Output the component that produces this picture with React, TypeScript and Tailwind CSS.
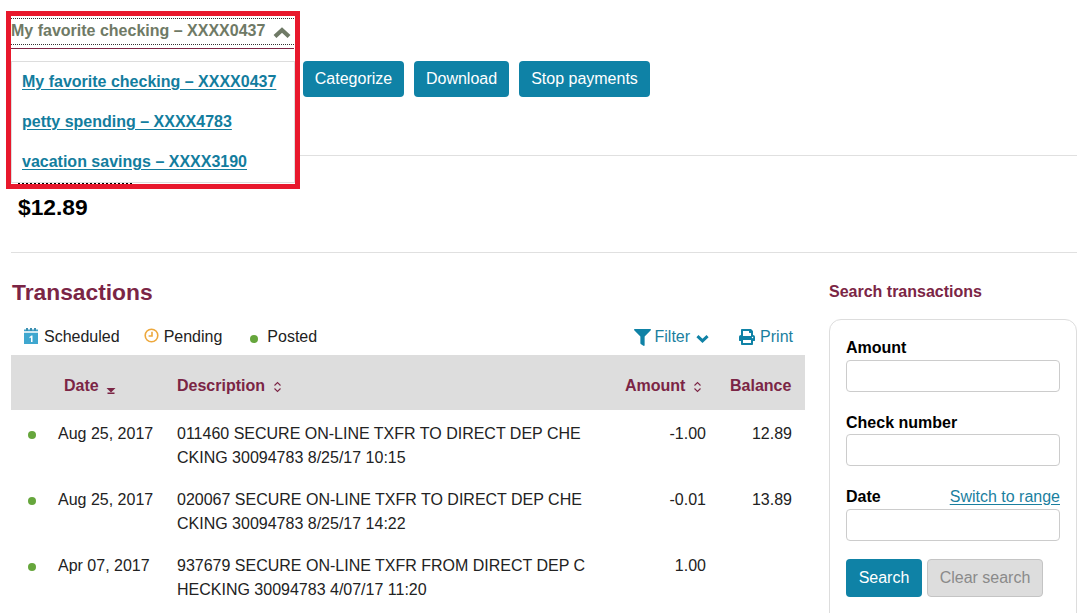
import { FaFilter, FaPrint } from 'react-icons/fa';

const transactions = [
  { date: 'Aug 25, 2017', desc: '011460 SECURE ON-LINE TXFR TO DIRECT DEP CHECKING 30094783 8/25/17 10:15', amount: '-1.00', balance: '12.89' },
  { date: 'Aug 25, 2017', desc: '020067 SECURE ON-LINE TXFR TO DIRECT DEP CHECKING 30094783 8/25/17 14:22', amount: '-0.01', balance: '13.89' },
  { date: 'Apr 07, 2017', desc: '937679 SECURE ON-LINE TXFR FROM DIRECT DEP CHECKING 30094783 4/07/17 11:20', amount: '1.00', balance: '' },
];

const accounts = ['My favorite checking – XXXX0437', 'petty spending – XXXX4783', 'vacation savings – XXXX3190'];

function SortIcon() {
  return (
    <svg width="9" height="12" viewBox="0 0 9 12" fill="none" stroke="#7b2545" strokeWidth="1.1" className="ml-[8px] mt-[7px]">
      <path d="M1.5 4.5 4.5 1.5 7.5 4.5" />
      <path d="M1.5 7.5 4.5 10.5 7.5 7.5" />
    </svg>
  );
}

function SortedIcon() {
  return (
    <svg width="10" height="6" viewBox="0 0 10 6" fill="#7b2545" className="ml-[7px] mt-[14px]">
      <path d="M0.5 0h9L5 4.5z" />
      <rect x="1.5" y="4.5" width="7" height="1.5" />
    </svg>
  );
}

function CalendarIcon() {
  return (
    <svg width="14" height="16" viewBox="0 0 14 16" className="mr-[6px] mt-[3px]">
      <rect x="0" y="1.5" width="14" height="14.5" fill="#3fa7cf" />
      <rect x="0" y="3" width="14" height="2" fill="#cfe8f2" />
      <rect x="2" y="0" width="2" height="3" fill="#3d8fb0" />
      <rect x="6" y="0" width="2" height="3" fill="#3d8fb0" />
      <rect x="10" y="0" width="2" height="3" fill="#3d8fb0" />
      <path d="M5.5 9 7.5 7.5H8.5V14H7V9.5L5.5 10.2z" fill="#ffffff" />
    </svg>
  );
}

function ClockIcon() {
  return (
    <svg width="15" height="15" viewBox="0 0 15 15" fill="none" stroke="#eda83c" strokeWidth="1.6" className="mr-[5px] mt-[3px]">
      <circle cx="7.5" cy="7.5" r="6.3" />
      <path d="M8 3.8V8H4.6" />
    </svg>
  );
}

function Chevron({ up, className, color }: { up?: boolean; className: string; color: string }) {
  return (
    <svg viewBox="0 0 18 11" fill="none" stroke={color} strokeWidth="4.2" className={className}>
      <path d={up ? 'M2 9.5 9 3 16 9.5' : 'M2 1.5 9 8 16 1.5'} />
    </svg>
  );
}

function Field({ label, link }: { label: string; link?: string }) {
  return (
    <div className="flex flex-col">
      <div className="flex h-[24px] items-center justify-between leading-[24px]">
        <span className="font-bold text-black">{label}</span>
        {link && <a className="text-[#1b7f9f] underline underline-offset-2">{link}</a>}
      </div>
      <input className="mt-[-0.5px] h-[32px] w-full rounded-[4px] border border-[#cccccc] bg-white" />
    </div>
  );
}

export default function App() {
  return (
    <div className="relative h-[613px] w-[1080px] overflow-hidden bg-white font-['Liberation_Sans',Arial,sans-serif] text-[16px] text-[#222222]">
      <div className="absolute left-[6px] top-[11px] z-10 h-[178px] w-[294px] border-[5px] border-[#e8182c]">
        <div className="mt-[2px] flex h-[27px] w-[283px] items-center justify-between border-y border-dotted border-[#333333] bg-white pb-[2px] pr-[3px] font-bold text-[#6f7a66]">
          <span>My favorite checking – XXXX0437</span>
          <Chevron up color="#6f7a66" className="mt-[3px] h-[11px] w-[18px]" />
        </div>
        <div className="mt-[3px] h-px w-[283px] bg-[#7b2545]" />
        <div className="mt-[12px] flex h-[122px] w-[284px] flex-col gap-[16px] border border-[#dddddd] bg-white pl-[10px] pt-[8px] font-bold text-[#137d9e]">
          {accounts.map((account) => (
            <a key={account} className="block h-[24px] leading-[24px] underline underline-offset-2">
              {account}
            </a>
          ))}
        </div>
      </div>

      <div className="ml-[303px] flex gap-[10px] pt-[61px]">
        <button className="h-[36px] w-[101px] rounded-[4px] bg-[#0f82a6] text-white">Categorize</button>
        <button className="h-[36px] w-[95px] rounded-[4px] bg-[#0f82a6] text-white">Download</button>
        <button className="h-[36px] w-[131px] rounded-[4px] bg-[#0f82a6] text-white">Stop payments</button>
      </div>

      <div className="ml-[11px] mr-[3px] mt-[58px] h-px bg-[#e0e0e0]" />

      <div className="pl-[18px]">
        <div className="mt-[6px] h-[24px] leading-[24px]">
          <span className="border-b-2 border-dotted border-black">Current balance</span>
        </div>
        <div className="mt-[4px] text-[22.8px] font-bold leading-[34px] text-black">$12.89</div>
      </div>

      <div className="ml-[11px] mr-[3px] mt-[28px] h-px bg-[#e0e0e0]" />

      <div className="ml-[11px] mt-[22px] flex">
        <div className="w-[794px]">
          <h1 className="pl-px text-[22.8px] font-bold leading-[34px] text-[#7b2545]">Transactions</h1>
          <div className="mt-[16px] flex h-[30px] items-start justify-between pl-[13px] pr-[12px] leading-[24px]">
            <div className="flex">
              <span className="flex"><CalendarIcon />Scheduled</span>
              <span className="ml-[24px] flex"><ClockIcon />Pending</span>
              <span className="ml-[28px] flex items-start">
                <span className="mr-[9px] mt-[10px] size-[8px] rounded-full bg-[#66a63c]" />
                Posted
              </span>
            </div>
            <div className="flex text-[#1b7f9f]">
              <span className="flex items-center">
                <FaFilter className="mr-[4px] text-[17px] text-[#0f82a6]" />
                Filter
                <Chevron color="#0f82a6" className="ml-[6px] mt-[3px] h-[8px] w-[13px]" />
              </span>
              <span className="ml-[30px] flex items-center">
                <FaPrint className="mr-[5px] text-[16px] text-[#0f82a6]" />
                Print
              </span>
            </div>
          </div>
          <div className="flex h-[55px] items-center bg-[#dddddd] pt-[7px] font-bold text-[#7b2545]">
            <span className="ml-[53px] flex w-[113px]">Date<SortedIcon /></span>
            <span className="flex w-[448px]">Description<SortIcon /></span>
            <span className="flex w-[105px]">Amount<SortIcon /></span>
            <span>Balance</span>
          </div>
          {transactions.map((t) => (
            <div key={t.desc} className="flex pb-[6px] pt-[12px] leading-[24px]">
              <span className="ml-[17px] mt-[9px] size-[8px] shrink-0 rounded-full bg-[#66a63c]" />
              <span className="ml-[22px] w-[119px] shrink-0">{t.date}</span>
              <span className="w-[415px] shrink-0 break-all">{t.desc}</span>
              <span className="w-[114px] shrink-0 text-right">{t.amount}</span>
              <span className="w-[86px] shrink-0 text-right">{t.balance}</span>
            </div>
          ))}
        </div>

        <div className="ml-[24px] w-[248px]">
          <h2 className="mt-[5px] font-bold leading-[24px] text-[#7b2545]">Search transactions</h2>
          <div className="mt-[15px] flex h-[320px] flex-col gap-[19px] rounded-[12px] border border-[#dddddd] px-[16px] pt-[16px]">
            <Field label="Amount" />
            <Field label="Check number" />
            <Field label="Date" link="Switch to range" />
            <div className="mt-[-1px] flex gap-[5px]">
              <button className="h-[38px] w-[76px] rounded-[4px] bg-[#0f82a6] text-white">Search</button>
              <button className="h-[38px] w-[116px] rounded-[4px] border border-[#c4c4c4] bg-[#dddddd] text-[#8a8a8a]">Clear search</button>
            </div>
          </div>
        </div>
      </div>
    </div>
  );
}
